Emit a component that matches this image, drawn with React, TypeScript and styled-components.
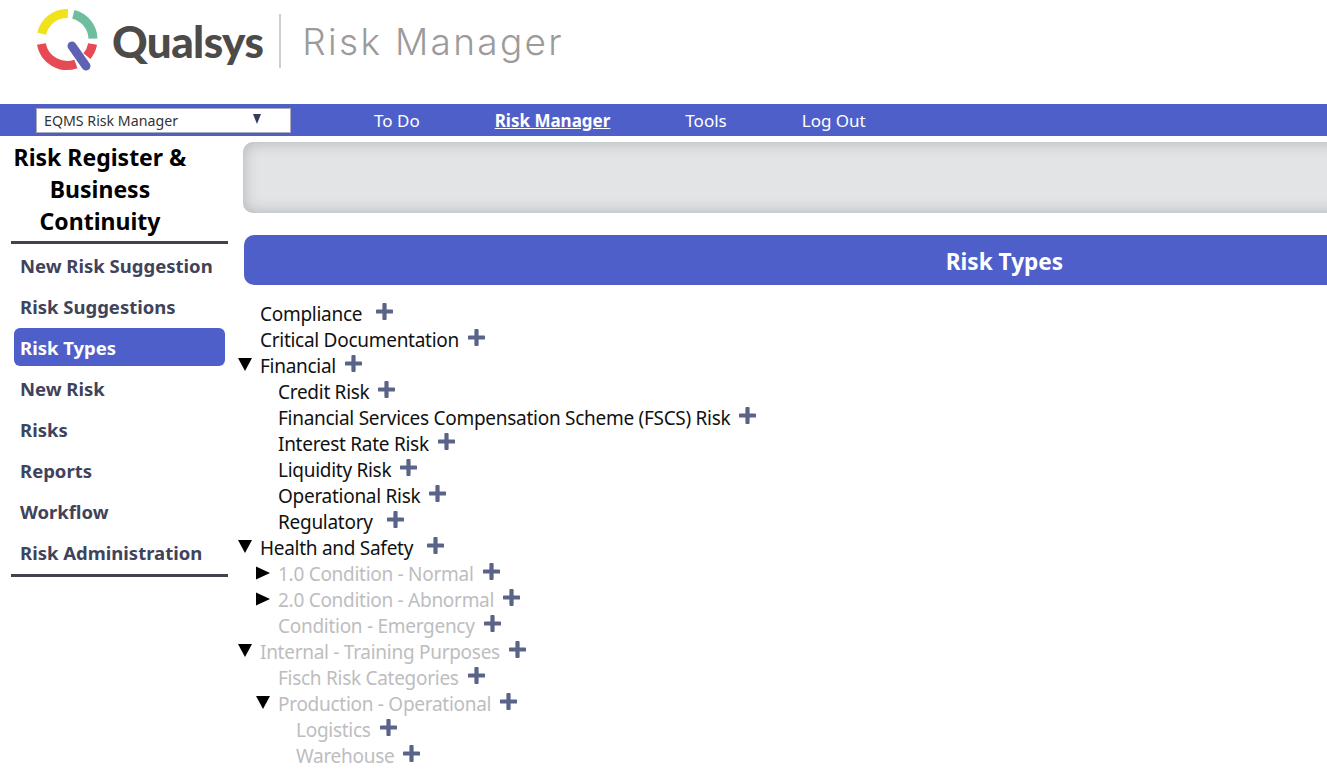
import React from "react";
import styled, { createGlobalStyle } from "styled-components";

const Global = createGlobalStyle`
  html, body { margin: 0; padding: 0; width: 1327px; height: 769px; overflow: hidden; background: #fff; }
  body { font-family: "Noto Sans", "Open Sans", "Liberation Sans", sans-serif; color: #000; }
`;
const Page = styled.div`width: 1327px; height: 769px; overflow: hidden;`;
const Header = styled.header`height: 104px; padding: 9px 0 0 36px; box-sizing: border-box; display: flex; align-items: flex-start;`;
const LogoWrap = styled.div`display: flex; align-items: center; height: 64px;`;
const LogoWord = styled.span`font-family: "Lato", sans-serif; font-weight: 900; font-size: 44px; letter-spacing: -.6px; color: #4d4a4a; margin-left: 14px; line-height: 1;`;
const LogoDivider = styled.span`width: 2px; height: 54px; background: #cfcfcf; margin: 0 21px 0 16px;`;
const LogoProduct = styled.span`font-family: "Inter", sans-serif; font-weight: 300; font-size: 37px; letter-spacing: 2.3px; color: #9b9b9b; line-height: 1;`;
const NavBar = styled.nav`height: 32px; background: #4f5fca; display: flex; align-items: center; padding-left: 36px;`;
const Select = styled.div`width: 255px; height: 25px; box-sizing: border-box; background: #fff; border: 1px solid #aab; display: flex; align-items: center; justify-content: space-between; padding: 1px 29px 0 7px; font-size: 14.2px; color: #333; margin-right: 83px;`;
const Caret = styled.span`width: 0; height: 0; border-left: 4.5px solid transparent; border-right: 4.5px solid transparent; border-top: 10px solid #333c5c; margin-bottom: 3px;`;
const NavLinks = styled.div`display: flex; gap: 75px;`;
const NavLink = styled.a<{ $active?: boolean }>`font-size: 17px; color: #fff; font-weight: ${p => p.$active ? 700 : 400}; text-decoration: ${p => p.$active ? "underline" : "none"};`;
const Body = styled.div`display: flex; align-items: flex-start;`;
const Sidebar = styled.aside`width: 217px; margin: 5px 0 0 11px; flex: none;`;
const SideTitle = styled.h1`margin: 0; padding: 0 39px 4px 0; font-size: 23px; line-height: 32px; font-weight: 700; text-align: center; border-bottom: 3px solid #3f4252;`;
const SideList = styled.ul`list-style: none; margin: 0; padding: 0 0 3px; border-bottom: 3px solid #3f4252;`;
const SideItem = styled.li<{ $active?: boolean }>`height: 38px; margin: 3px 3px 0; padding: 0 6px; box-sizing: border-box; display: flex; align-items: center; border-radius: 6px; font-size: 18.5px; font-weight: 700; white-space: nowrap; color: ${p => p.$active ? "#fff" : "#40435a"}; background: ${p => p.$active ? "#4f5fca" : "transparent"}; &:first-child { margin-top: 2px; }`;
const Main = styled.main`width: 1522px; margin: 6px 0 0 15px; flex: none;`;
const GreyPanel = styled.div`height: 71px; background: #e3e4e6; border-radius: 10px; box-shadow: inset 0 0 14px 2px #b8bbbe;`;
const TitleBar = styled.h2`margin: 22px 0 0 1px; height: 50px; box-sizing: border-box; padding-top: 3px; background: #4f5fca; color: #fff; border-radius: 10px; font-size: 22.6px; font-weight: 700; display: flex; align-items: center; justify-content: center;`;
const Tree = styled.ul`list-style: none; margin: 16px 0 0; padding: 0;`;
const Row = styled.li<{ $level: number }>`height: 26px; display: flex; align-items: center; padding-left: ${p => p.$level * 18 + 17}px; font-size: 19px; letter-spacing: -.28px; white-space: nowrap; position: relative;`;
const Label = styled.span<{ $muted?: boolean }>`color: ${p => p.$muted ? "#bdbdc0" : "#111"};`;
const Arrow = styled.svg<{ $level: number }>`position: absolute; top: 5px; left: ${p => p.$level * 18 - 5}px;`;
const Plus = styled.svg<{ $wide?: boolean }>`margin: -6px 0 0 ${p => p.$wide ? 14 : 9}px;`;

const QLogo = () => (
  <svg width="62" height="64" viewBox="0 0 62 64" fill="none" aria-hidden="true">
    <path d="M5.7 24.7A26 26 0 0 1 31.9 4.5" stroke="#f2e21c" strokeWidth="9" />
    <path d="M37.3 5.3A26 26 0 0 1 57 29.6" stroke="#6dbd9e" strokeWidth="9" />
    <path d="M5.4 35A26 26 0 0 0 39.9 54.9" stroke="#e64b55" strokeWidth="9" />
    <path d="M56.6 35A26 26 0 0 1 50.9 47.2" stroke="#e64b55" strokeWidth="9" />
    <path d="M36 37L50 57" stroke="#5f61b4" strokeWidth="9" strokeLinecap="round" />
  </svg>
);
const PlusIcon = ({ wide }: { wide?: boolean }) => (
  <Plus $wide={wide} width="17" height="17" viewBox="0 0 17 17">
    <path d="M8.5 1.5V15.5M1.5 8.5H15.5" stroke="#5a6388" strokeWidth="4.2" strokeLinecap="round" />
  </Plus>
);
const rows: { t: string; l: number; a?: "d" | "r"; m?: boolean; w?: boolean }[] = [
  { t: "Compliance", l: 0, w: true },
  { t: "Critical Documentation", l: 0 },
  { t: "Financial", l: 0, a: "d" },
  { t: "Credit Risk", l: 1 },
  { t: "Financial Services Compensation Scheme (FSCS) Risk", l: 1 },
  { t: "Interest Rate Risk", l: 1 },
  { t: "Liquidity Risk", l: 1 },
  { t: "Operational Risk", l: 1 },
  { t: "Regulatory", l: 1, w: true },
  { t: "Health and Safety", l: 0, a: "d", w: true },
  { t: "1.0 Condition - Normal", l: 1, a: "r", m: true },
  { t: "2.0 Condition - Abnormal", l: 1, a: "r", m: true },
  { t: "Condition - Emergency", l: 1, m: true },
  { t: "Internal - Training Purposes", l: 0, a: "d", m: true },
  { t: "Fisch Risk Categories", l: 1, m: true },
  { t: "Production - Operational", l: 1, a: "d", m: true },
  { t: "Logistics", l: 2, m: true },
  { t: "Warehouse", l: 2, m: true },
];
const side = ["New Risk Suggestion", "Risk Suggestions", "Risk Types", "New Risk", "Risks", "Reports", "Workflow", "Risk Administration"];

export default function App() {
  return (
    <Page>
      <Global />
      <Header>
        <LogoWrap>
          <QLogo />
          <LogoWord>Qualsys</LogoWord>
          <LogoDivider />
          <LogoProduct>Risk Manager</LogoProduct>
        </LogoWrap>
      </Header>
      <NavBar>
        <Select>EQMS Risk Manager<Caret /></Select>
        <NavLinks>
          <NavLink>To Do</NavLink>
          <NavLink $active>Risk Manager</NavLink>
          <NavLink>Tools</NavLink>
          <NavLink>Log Out</NavLink>
        </NavLinks>
      </NavBar>
      <Body>
        <Sidebar>
          <SideTitle>Risk Register &amp; Business Continuity</SideTitle>
          <SideList>
            {side.map(s => <SideItem key={s} $active={s === "Risk Types"}>{s}</SideItem>)}
          </SideList>
        </Sidebar>
        <Main>
          <GreyPanel />
          <TitleBar>Risk Types</TitleBar>
          <Tree>
            {rows.map(r => (
              <Row key={r.t} $level={r.l}>
                {r.a && (
                  <Arrow $level={r.l} width="14" height="14" viewBox="0 0 14 14">
                    <path d={r.a === "d" ? "M0 0H14L7 13Z" : "M0 0.5L14 7L0 13.5Z"} fill="#000" />
                  </Arrow>
                )}
                <Label $muted={r.m}>{r.t}</Label>
                <PlusIcon wide={r.w} />
              </Row>
            ))}
          </Tree>
        </Main>
      </Body>
    </Page>
  );
}
